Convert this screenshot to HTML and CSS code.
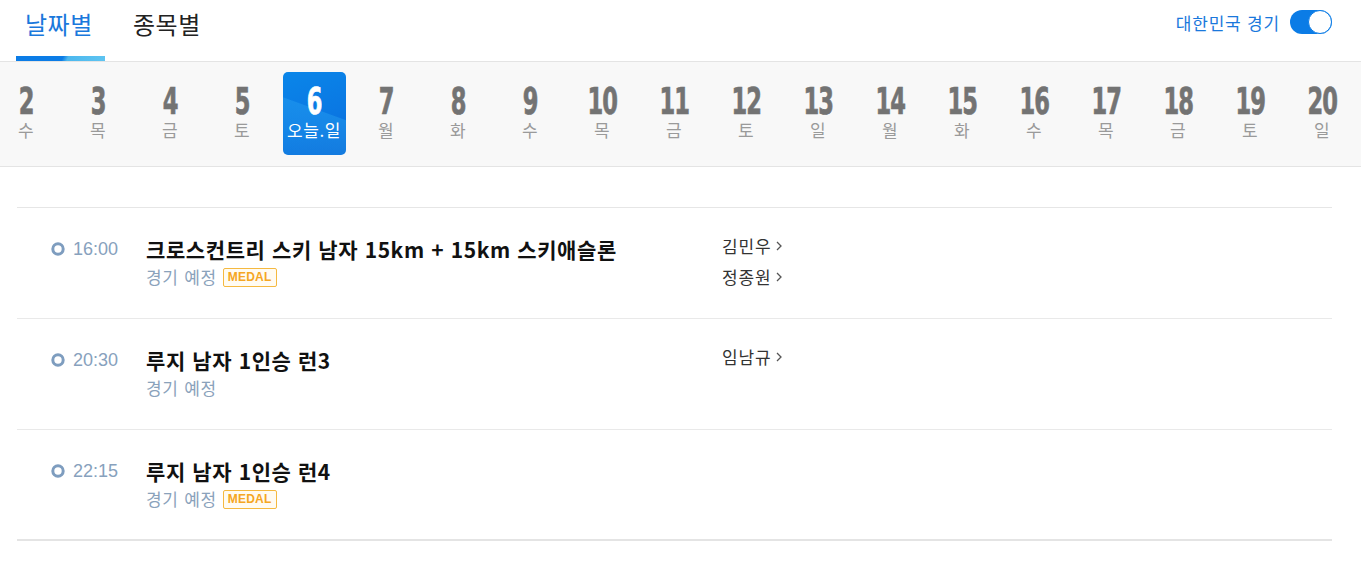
FILE: index.html
```html
<!DOCTYPE html>
<html lang="ko">
<head>
<meta charset="utf-8">
<title>일정</title>
<link rel="stylesheet" href="styles.css">
</head>
<body>
<header class="tabs">
  <nav class="tab-list">
    <a class="tab active">날짜별</a>
    <a class="tab">종목별</a>
  </nav>
  <div class="korea-filter">
    <span class="filter-label">대한민국 경기</span>
    <span class="toggle"><span class="knob"></span></span>
  </div>
</header>

<div class="date-strip">
  <ul class="dates">
    <li class="date"><span class="num">2</span><span class="day">수</span></li>
    <li class="date"><span class="num">3</span><span class="day">목</span></li>
    <li class="date"><span class="num">4</span><span class="day">금</span></li>
    <li class="date"><span class="num">5</span><span class="day">토</span></li>
    <li class="date today"><span class="num">6</span><span class="day">오늘.일</span></li>
    <li class="date"><span class="num">7</span><span class="day">월</span></li>
    <li class="date"><span class="num">8</span><span class="day">화</span></li>
    <li class="date"><span class="num">9</span><span class="day">수</span></li>
    <li class="date"><span class="num">10</span><span class="day">목</span></li>
    <li class="date"><span class="num">11</span><span class="day">금</span></li>
    <li class="date"><span class="num">12</span><span class="day">토</span></li>
    <li class="date"><span class="num">13</span><span class="day">일</span></li>
    <li class="date"><span class="num">14</span><span class="day">월</span></li>
    <li class="date"><span class="num">15</span><span class="day">화</span></li>
    <li class="date"><span class="num">16</span><span class="day">수</span></li>
    <li class="date"><span class="num">17</span><span class="day">목</span></li>
    <li class="date"><span class="num">18</span><span class="day">금</span></li>
    <li class="date"><span class="num">19</span><span class="day">토</span></li>
    <li class="date"><span class="num">20</span><span class="day">일</span></li>
  </ul>
</div>

<main class="schedule">
  <ul class="events">
    <li class="event">
      <div class="time">
        <svg class="dot" width="14" height="14" viewBox="0 0 14 14"><circle cx="7" cy="7" r="5.2" fill="none" stroke="#7e9dbf" stroke-width="3"/></svg>
        <span>16:00</span>
      </div>
      <div class="info">
        <div class="title">크로스컨트리 스키 남자 15km + 15km 스키애슬론</div>
        <div class="status">경기 예정 <span class="badge">MEDAL</span></div>
      </div>
      <div class="athletes">
        <a class="athlete">김민우<svg class="chev" width="8" height="12" viewBox="0 0 8 12"><path d="M2 2l4 4-4 4" fill="none" stroke="#555" stroke-width="1.3"/></svg></a>
        <a class="athlete">정종원<svg class="chev" width="8" height="12" viewBox="0 0 8 12"><path d="M2 2l4 4-4 4" fill="none" stroke="#555" stroke-width="1.3"/></svg></a>
      </div>
    </li>
    <li class="event">
      <div class="time">
        <svg class="dot" width="14" height="14" viewBox="0 0 14 14"><circle cx="7" cy="7" r="5.2" fill="none" stroke="#7e9dbf" stroke-width="3"/></svg>
        <span>20:30</span>
      </div>
      <div class="info">
        <div class="title">루지 남자 1인승 런3</div>
        <div class="status">경기 예정</div>
      </div>
      <div class="athletes">
        <a class="athlete">임남규<svg class="chev" width="8" height="12" viewBox="0 0 8 12"><path d="M2 2l4 4-4 4" fill="none" stroke="#555" stroke-width="1.3"/></svg></a>
      </div>
    </li>
    <li class="event">
      <div class="time">
        <svg class="dot" width="14" height="14" viewBox="0 0 14 14"><circle cx="7" cy="7" r="5.2" fill="none" stroke="#7e9dbf" stroke-width="3"/></svg>
        <span>22:15</span>
      </div>
      <div class="info">
        <div class="title">루지 남자 1인승 런4</div>
        <div class="status">경기 예정 <span class="badge">MEDAL</span></div>
      </div>
      <div class="athletes"></div>
    </li>
  </ul>
</main>
</body>
</html>
```

FILE: styles.css
```css
* { box-sizing: border-box; }
html, body { margin: 0; padding: 0; background: #fff; }
body {
  font-family: "Noto Sans CJK KR", "Noto Sans", sans-serif;
  color: #111;
  overflow: hidden;
}
ul { list-style: none; margin: 0; padding: 0; }
a { text-decoration: none; color: inherit; }

/* Tabs */
.tabs {
  height: 62px;
  border-bottom: 1px solid #e4e4e4;
  display: flex;
  justify-content: space-between;
  align-items: flex-start;
  padding: 0 29px 0 16px;
}
.tab-list { display: flex; gap: 19px; height: 61px; }
.tab {
  display: block;
  height: 61px;
  width: 89px;
  padding-left: 9px;
  padding-top: 2px;
  font-size: 24px;
  line-height: 44px;
  color: #222;
  letter-spacing: 0.5px;
}
.tab.active {
  color: #1a78dc;
  background:
    linear-gradient(115deg, #0b7ce6 0%, #0b7ce6 52%, #4db8ee 58%, #5ec4f1 100%) left bottom / 100% 5px no-repeat;
}
.korea-filter {
  display: flex;
  align-items: center;
  gap: 10px;
  height: 44px;
}
.filter-label { font-size: 17px; color: #1a78dc; letter-spacing: 0.8px; }
.toggle {
  width: 42px;
  height: 24px;
  border-radius: 12px;
  background: #0b7ce6;
  display: flex;
  justify-content: flex-end;
  align-items: center;
}
.knob {
  width: 24px;
  height: 24px;
  border-radius: 50%;
  background: #fff;
  border: 1.5px solid #0b7ce6;
}

/* Date strip */
.date-strip {
  height: 105px;
  background: #f8f8f8;
  border-bottom: 1px solid #e4e4e4;
  overflow: hidden;
  padding-top: 10px;
}
.dates { display: flex; margin-left: -10px; }
.date {
  flex: 0 0 72px;
  display: flex;
  flex-direction: column;
  align-items: center;
  height: 83px;
}
.num {
  display: block;
  font-family: "Liberation Sans Narrow", "DejaVu Sans Condensed", "Liberation Sans", sans-serif;
  font-weight: 700;
  font-size: 38px;
  line-height: 30px;
  margin-top: 14px;
  color: #737373;
  transform: scaleX(0.66);
  letter-spacing: -1.5px;
  -webkit-text-stroke: 0.7px #737373;
}
.day {
  display: block;
  font-size: 17px;
  line-height: 20px;
  margin-top: 4px;
  color: #9a9a9a;
  letter-spacing: 0.6px;
}
.date.today {
  flex: 0 0 63px;
  margin: 0 4.5px;
  border-radius: 5px;
  background:
    linear-gradient(200deg, rgba(10,100,215,0) 45%, rgba(40,160,240,0.45) 46%, rgba(40,160,240,0.25) 100%),
    linear-gradient(160deg, #0a86e9 0%, #0a78e3 55%, #0a68d6 100%);
}
.date.today .num { color: #fff; -webkit-text-stroke: 0.7px #fff; }
.date.today .day { color: #fff; }

/* Schedule */
.schedule { padding: 40px 29px 0 17px; }
.events { border-top: 1px solid #e6e6e6; }
.event {
  height: 111px;
  border-bottom: 1px solid #e9e9e9;
  display: flex;
  padding-top: 27px;
}
.event:last-child { border-bottom: 2px solid #e4e4e4; }
.time {
  width: 129px;
  padding-left: 34px;
  display: flex;
  align-items: center;
  gap: 8px;
  height: 28px;
  font-family: "Liberation Sans", sans-serif;
  font-size: 18px;
  color: #87a1bd;
}
.dot { flex: none; }
.info { width: 576px; }
.title {
  font-size: 21px;
  font-weight: 700;
  line-height: 28px;
  color: #111;
  letter-spacing: 0.6px;
}
.status {
  font-size: 17px;
  line-height: 28px;
  color: #8aa2bb;
  display: flex;
  align-items: center;
  gap: 6px;
  letter-spacing: 0.7px;
}
.badge {
  display: inline-block;
  font-family: "Liberation Sans", sans-serif;
  font-size: 12px;
  font-weight: 700;
  color: #f5a623;
  border: 1px solid #f5b940;
  background: #fffbf2;
  border-radius: 2px;
  height: 19px;
  line-height: 17px;
  padding: 0 4px;
  letter-spacing: 0.2px;
}
.athletes { display: flex; flex-direction: column; margin-top: -5px; }
.athlete {
  display: flex;
  align-items: center;
  gap: 3px;
  font-size: 17px;
  line-height: 31px;
  color: #333;
  letter-spacing: 0.9px;
}
.chev { flex: none; margin-top: 1px; }
```
